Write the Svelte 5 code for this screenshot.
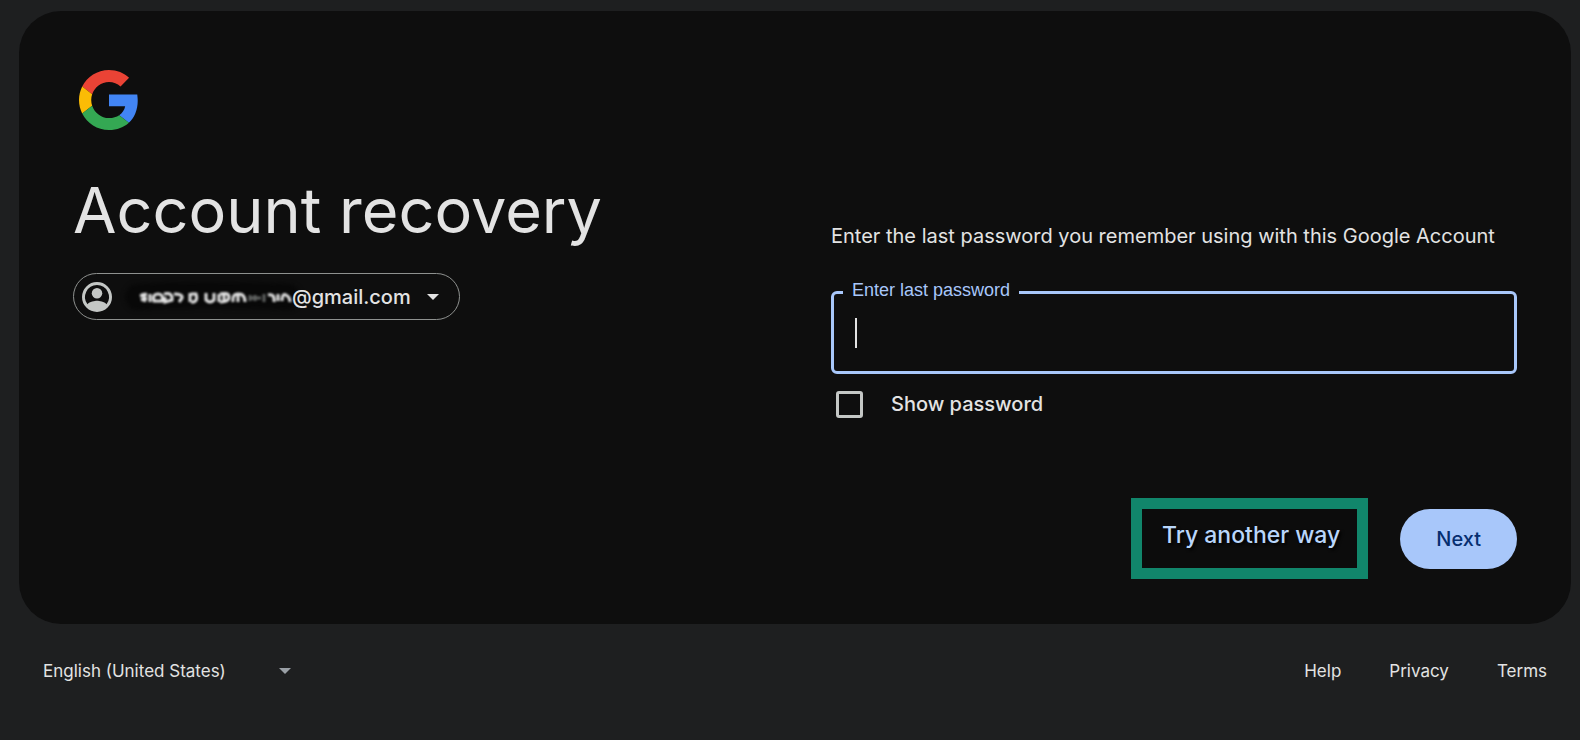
<script lang="ts">
  type FooterLink = { label: string; href: string };

  const links: FooterLink[] = [
    { label: 'Help', href: '#help' },
    { label: 'Privacy', href: '#privacy' },
    { label: 'Terms', href: '#terms' }
  ];

  let password = $state('');
  let showPassword = $state(false);
</script>

<div class="page">
  <main class="card">
    <svg class="logo" viewBox="0 0 48 48" role="img" aria-label="Google">
      <path fill="#ea4335" d="M24 9.5c3.54 0 6.71 1.22 9.21 3.6l6.85-6.85C35.9 2.38 30.47 0 24 0 14.62 0 6.51 5.38 2.56 13.22l7.98 6.19C12.43 13.72 17.74 9.5 24 9.5z" />
      <path fill="#4285f4" d="M46.98 24.55c0-1.57-.15-3.09-.38-5.05H24v9.52h12.94c-.58 2.96-2.26 5.48-4.78 7.18l7.73 6c4.51-4.18 7.09-10.36 7.09-17.65z" />
      <path fill="#fbbc05" d="M10.53 28.59c-.48-1.45-.76-2.99-.76-4.59s.27-3.14.76-4.59l-7.98-6.19C.92 16.46 0 20.12 0 24c0 3.88.92 7.54 2.56 10.78l7.97-6.19z" />
      <path fill="#34a853" d="M24 48c6.48 0 11.93-2.13 15.89-5.81l-7.73-6c-2.15 1.45-4.92 2.3-8.16 2.3-6.26 0-11.57-4.22-13.47-9.91l-7.98 6.19C6.51 42.62 14.62 48 24 48z" />
    </svg>

    <div class="columns">
      <section class="intro">
        <h1>Account recovery</h1>

        <button class="account" type="button">
          <svg class="avatar" viewBox="2 2 20 20" aria-hidden="true">
            <path d="M12 2a10 10 0 1 0 0 20 10 10 0 0 0 0-20zm0 2a8 8 0 0 1 6.36 12.83C16.93 15.09 13.46 14.5 12 14.5s-4.93.59-6.36 2.33A8 8 0 0 1 12 4z" />
            <circle cx="12" cy="9.5" r="3.5" />
          </svg>
          <span class="address">
            <svg class="redacted" viewBox="0 0 152 24" aria-hidden="true">
              <path class="smudge" d="M-2 12q60-4 150 0" />
              <g class="marks">
                <path d="M0 11l7-2M3 8l2 9M1 15l6-2M10 9v8M14 16q-2-7 4-7t4 7zM24 9q9-2 8 6l-7 2v-5M34 9q9 0 8 4l-3 4M50 8v9M51 9h5q2 6-2 8h-3M66 8v7q4 4 8 0V8M79 9v8M80 9q9-2 9 3t-9 5M84 9v7M93 17q-1-8 5-8v8M99 9q6 0 6 8" />
                <path class="faint" d="M110 10v6M115 10v6M110 13h11M124 9v8" />
                <path d="M128 10q7-2 6 7M138 9v7M142 16q0-8 4-6t4 7" />
              </g>
            </svg>
            <span>@gmail.com</span>
          </span>
          <svg class="arrow" viewBox="0 0 12 6" aria-hidden="true">
            <path d="M0 0h12L6 6z" />
          </svg>
        </button>
      </section>

      <form class="recovery" onsubmit={(e) => e.preventDefault()}>
        <p>Enter the last password you remember using with this Google Account</p>

        <fieldset class="field">
          <legend><label for="password">Enter last password</label></legend>
          <div class="entry">
            {#if password === ''}
              <span class="caret"></span>
            {/if}
            <input
              id="password"
              type={showPassword ? 'text' : 'password'}
              bind:value={password}
            />
          </div>
        </fieldset>

        <label class="show">
          <input type="checkbox" bind:checked={showPassword} />
          <span>Show password</span>
        </label>

        <div class="actions">
          <button class="other" type="button">Try another way</button>
          <button class="next" type="submit">Next</button>
        </div>
      </form>
    </div>
  </main>

  <footer>
    <div class="language">
      <select aria-label="Language">
        <option>English (United States)</option>
      </select>
      <svg class="arrow" viewBox="0 0 12 6" aria-hidden="true">
        <path d="M0 0h12L6 6z" />
      </svg>
    </div>

    <nav>
      {#each links as link}
        <a href={link.href}>{link.label}</a>
      {/each}
    </nav>
  </footer>
</div>

<style>
  :global(body) {
    margin: 0;
    background: #1e1f20;
  }

  .page {
    box-sizing: border-box;
    min-height: 100vh;
    padding: 11px 9px 0 19px;
    background: #1e1f20;
    color: #e3e3e3;
    font-family: Inter, Roboto, sans-serif;
  }

  button,
  input,
  select {
    margin: 0;
    font-family: inherit;
    color: inherit;
  }

  .card {
    padding: 59px 54px 45px;
    border-radius: 42px;
    background: #0e0e0e;
  }

  .logo {
    display: block;
    width: 60px;
    height: 60px;
    margin-left: 6px;
  }

  .columns {
    display: grid;
    grid-template-columns: 1fr 1fr;
    gap: 72px;
    padding-top: 40px;
  }

  h1 {
    margin: 0 0 23px;
    font-size: 63px;
    font-weight: 400;
    line-height: 80px;
  }

  .account {
    display: flex;
    align-items: center;
    box-sizing: border-box;
    height: 47px;
    padding: 0 20px 0 8px;
    border: 1px solid #8e918f;
    border-radius: 24px;
    background: transparent;
    font-size: 20px;
    font-weight: 500;
  }

  .avatar {
    width: 30px;
    height: 30px;
    margin-right: 28px;
    fill: #c4c7c5;
  }

  .address {
    display: flex;
    align-items: center;
  }

  .redacted {
    width: 152px;
    height: 24px;
    overflow: visible;
    fill: none;
    stroke: #e3e3e3;
    stroke-width: 3;
  }

  .smudge {
    stroke: #080808;
    stroke-width: 26;
    stroke-linecap: round;
    filter: blur(2px);
  }

  .marks {
    filter: blur(1px);
  }

  .faint {
    stroke: #5f6160;
  }

  .arrow {
    width: 12px;
    height: 6px;
    margin-left: 16px;
    fill: #e3e3e3;
  }

  .recovery {
    padding-top: 50px;
  }

  p {
    margin: 0;
    font-size: 20px;
    line-height: 32px;
  }

  .field {
    box-sizing: border-box;
    height: 90px;
    margin: 32px 0 0;
    padding: 0 21px;
    border: 3px solid #a8c7fa;
    border-radius: 6px;
  }

  legend {
    margin-left: -12px;
    padding: 0 9px;
    color: #a8c7fa;
    font-family: 'Liberation Sans', sans-serif;
    font-size: 18px;
    line-height: 20px;
  }

  legend label {
    display: block;
    margin-top: -4px;
  }

  .entry {
    display: flex;
    align-items: center;
    padding-top: 18px;
  }

  .caret {
    width: 2px;
    height: 30px;
    background: #e3e3e3;
  }

  .field input {
    flex: 1;
    padding: 0;
    border: 0;
    outline: 0;
    background: transparent;
    font-size: 24px;
  }

  .show {
    display: flex;
    align-items: center;
    gap: 28px;
    margin: 12px 0 0 5px;
    font-size: 20px;
    font-weight: 500;
    line-height: 36px;
  }

  .show input {
    appearance: none;
    box-sizing: border-box;
    width: 27px;
    height: 27px;
    border: 3px solid #c4c7c5;
    border-radius: 3px;
  }

  .actions {
    display: flex;
    align-items: center;
    justify-content: flex-end;
    gap: 32px;
    margin-top: 76px;
  }

  .other {
    padding: 12px 17px 19px 20px;
    border: 11px solid #11866b;
    background: #0c0c0c;
    color: #b9d6fb;
    font-size: 23px;
    font-weight: 500;
    line-height: 28px;
    text-shadow: 2px 2px 3px #000;
  }

  .next {
    height: 60px;
    padding: 0 36px;
    border: 0;
    border-radius: 30px;
    background: #a8c7fa;
    color: #062e6f;
    font-size: 20px;
    font-weight: 500;
  }

  footer {
    display: flex;
    align-items: center;
    justify-content: space-between;
    padding: 33px 24px;
    font-size: 17px;
    line-height: 28px;
  }

  .language {
    display: flex;
    align-items: center;
  }

  select {
    appearance: none;
    padding: 0;
    border: 0;
    background: transparent;
    font-size: 17px;
    line-height: 28px;
  }

  .language .arrow {
    margin-left: 53px;
    fill: #9aa0a6;
  }

  nav {
    display: flex;
    gap: 48px;
  }

  a {
    color: #e3e3e3;
    text-decoration: none;
  }
</style>
